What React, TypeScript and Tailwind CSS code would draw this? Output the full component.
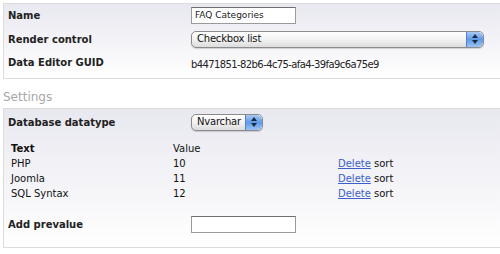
import React from "react";

type Prevalue = { text: string; value: string };

const PREVALUES: Prevalue[] = [
  { text: "PHP", value: "10" },
  { text: "Joomla", value: "11" },
  { text: "SQL Syntax", value: "12" },
];

function Arrows() {
  return (
    <div className="flex h-full w-[17px] flex-col items-center justify-center gap-[2px] rounded-r-[5px] border-l border-[#5a7fc4] bg-gradient-to-b from-[#a9c8f3] via-[#5d9ae8] to-[#9cc2f3]">
      <svg width="6" height="4" viewBox="0 0 6 4">
        <path d="M3 0 L6 4 L0 4 Z" fill="#1b2a44" />
      </svg>
      <svg width="6" height="4" viewBox="0 0 6 4">
        <path d="M0 0 L6 0 L3 4 Z" fill="#1b2a44" />
      </svg>
    </div>
  );
}

function MacSelect({ label, width }: { label: string; width: string }) {
  return (
    <div
      className={`flex h-[17px] items-center overflow-hidden rounded-[5px] border border-[#8b8b8b] bg-gradient-to-b from-white via-[#f2f2f2] to-[#dcdcdc] shadow-[0_1px_1px_rgba(0,0,0,0.15)] ${width}`}
    >
      <span className="flex-1 whitespace-nowrap pl-[5px] text-[10px] leading-none tracking-[-0.2px] text-[#111]">{label}</span>
      <Arrows />
    </div>
  );
}

function TextBox({ value }: { value?: string }) {
  return (
    <div className="flex h-[17px] w-[105px] items-center border border-[#9a9a9a] border-t-[#6f6f6f] bg-white pl-[3px] text-[9px] text-[#222]">
      {value}
    </div>
  );
}

function Row({ label, children, h }: { label: string; children: React.ReactNode; h: string }) {
  return (
    <div className={`flex items-center ${h}`}>
      <div className="w-[187px] pl-[4px] text-[10px] font-bold text-[#222]">{label}</div>
      <div className="flex-1">{children}</div>
    </div>
  );
}

export default function App() {
  return (
    <div className="h-[254px] w-[500px] overflow-hidden bg-white pt-[3px] pl-[3px] font-['DejaVu_Sans',sans-serif]">
      <div className="h-[76px] border-t border-b border-l border-[#dcdcdc] bg-gradient-to-b from-[#e8e8f0] to-white">
        <Row label="Name" h="h-[23px]">
          <TextBox value="FAQ Categories" />
        </Row>
        <Row label="Render control" h="h-[24px]">
          <MacSelect label="Checkbox list" width="w-[293px]" />
        </Row>
        <Row label="Data Editor GUID" h="h-[23px]">
          <span className="text-[10px] tracking-[-0.6px] text-[#222]">b4471851-82b6-4c75-afa4-39fa9c6a75e9</span>
        </Row>
      </div>

      <div className="flex h-[29px] items-end pb-[2px] text-[12px] text-[#a8a8a8]">Settings</div>

      <div className="h-[140px] border-t border-b border-l border-[#dcdcdc] bg-gradient-to-b from-[#e8e8f0] to-white pt-[1px]">
        <Row label="Database datatype" h="h-[24px]">
          <MacSelect label="Nvarchar" width="w-[72px]" />
        </Row>

        <div className="mt-[6px] pl-[7px] text-[10px] text-[#111]">
          <div className="flex h-[16px] items-center">
            <span className="w-[162px] font-bold">Text</span>
            <span>Value</span>
          </div>
          {PREVALUES.map((p) => (
            <div key={p.text} className="flex h-[15px] items-center">
              <span className="w-[162px]">{p.text}</span>
              <span className="w-[165px]">{p.value}</span>
              <span>
                <a className="text-[#3a5fcd] underline">Delete</a> sort
              </span>
            </div>
          ))}
        </div>

        <div className="mt-[11px]">
          <Row label="Add prevalue" h="h-[24px]">
            <TextBox />
          </Row>
        </div>
      </div>
    </div>
  );
}
